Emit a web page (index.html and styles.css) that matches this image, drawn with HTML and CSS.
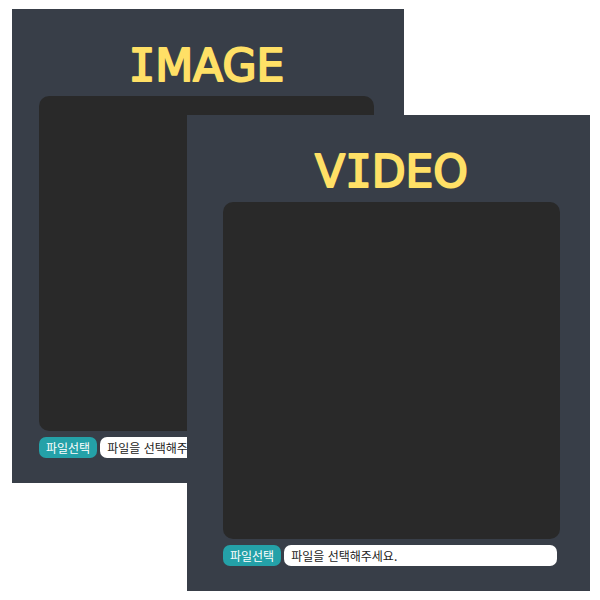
FILE: index.html
```
<!DOCTYPE html>
<html lang="ko">
<head>
<meta charset="utf-8">
<meta name="viewport" content="width=device-width, initial-scale=1">
<title>IMAGE / VIDEO</title>
<link rel="stylesheet" href="styles.css">
</head>
<body>
<main class="stage">
  <section class="card card-image">
    <h1 class="title"><svg class="title-art" width="100%" height="63"><text x="50%" y="48"><tspan class="serif-i">I</tspan>MAGE</text></svg></h1>
    <div class="preview"></div>
    <div class="picker">
      <button class="pick" type="button">파일선택</button>
      <input class="filename" type="text" value="파일을 선택해주세요." aria-label="파일" readonly>
    </div>
  </section>
  <section class="card card-video">
    <h1 class="title"><svg class="title-art" width="100%" height="63"><text x="50%" y="48">V<tspan class="serif-i">I</tspan>DEO</text></svg></h1>
    <div class="preview"></div>
    <div class="picker">
      <button class="pick" type="button">파일선택</button>
      <input class="filename" type="text" value="파일을 선택해주세요." aria-label="파일" readonly>
    </div>
  </section>
</main>
</body>
</html>
```
FILE: styles.css
```
* {
  box-sizing: border-box;
}

body {
  margin: 0;
  background: #fff;
  font-family: "Noto Sans CJK KR", sans-serif;
}

/* Two cards share the grid; the second one overlaps the first. */
.stage {
  display: grid;
  grid-template-columns: 175fr 217fr 186fr;
  grid-template-rows: 106px auto;
  align-items: start;
  padding: 9px 10px 8px 12px;
}

.card {
  padding: 24px 30px 25px;
  background: #383e48;
}

.card-image {
  grid-area: 1 / 1 / 3 / 3;
  padding-left: 27px;
}

.card-video {
  grid-area: 2 / 2 / 3 / 4;
  padding-left: 36px;
}

.title {
  margin: 0;
  font-family: "DejaVu Sans", sans-serif;
  font-size: 44px;
  font-weight: 400;
}

/* Round joins soften the corners of the letters. */
.title-art {
  display: block;
  fill: #ffe066;
  stroke: #ffe066;
  stroke-width: 2px;
  stroke-linejoin: round;
  text-anchor: middle;
}

/* Capital I with crossbars. */
.serif-i {
  font-family: "DejaVu Sans Mono", monospace;
}

.preview {
  aspect-ratio: 1;
  border-radius: 10px;
  background: #292929;
}

.picker {
  display: flex;
  gap: 3px;
  margin-top: 6px;
  padding-right: 3px;
}

.pick,
.filename {
  height: 21px;
  border: 0;
  border-radius: 7px;
  padding: 0 7px;
  font: 12px/21px "Noto Sans CJK KR", sans-serif;
}

.pick {
  flex: none;
  background: #24a1a8;
  color: #fff;
}

.filename {
  flex: 1;
  min-width: 0;
  background: #fff;
  color: #222;
}
```
